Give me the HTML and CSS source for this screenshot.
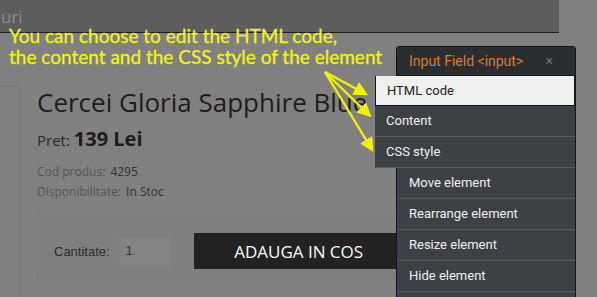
FILE: index.html
```html
<!DOCTYPE html>
<html lang="en">
<head>
    <meta charset="UTF-8">
    <title>Element Editor</title>
    <link rel="stylesheet" href="styles.css">
</head>
<body>
    <div class="topbar"><span class="crumb">uri</span></div>

    <div class="product">
        <div class="gallery"></div>
        <div class="details">
            <h1 class="title">Cercei Gloria Sapphire Blue</h1>
            <p class="price">Pret: <strong>139 Lei</strong></p>
            <p class="meta"><span class="label">Cod produs:</span> 4295</p>
            <p class="meta"><span class="label">Disponibilitate:</span> In Stoc</p>
            <div class="buy-box">
                <label class="qty-label">Cantitate:</label>
                <span class="qty-input">1</span>
                <button class="add-btn">ADAUGA IN COS</button>
            </div>
        </div>
    </div>

    <p class="hint">You can choose to edit the HTML code,<br>the content and the CSS style of the element</p>

    <svg class="arrows" width="597" height="297" viewBox="0 0 597 297">
        <defs>
            <marker id="head" markerWidth="6" markerHeight="6" refX="4" refY="3" orient="auto" markerUnits="strokeWidth">
                <path d="M0,0 L6,3 L0,6 Z" fill="#f2f200"/>
            </marker>
        </defs>
        <line x1="325" y1="72" x2="364" y2="93" stroke="#f2f200" stroke-width="2.4" marker-end="url(#head)"/>
        <line x1="325" y1="72" x2="368" y2="114" stroke="#f2f200" stroke-width="2.4" marker-end="url(#head)"/>
        <line x1="325" y1="72" x2="371" y2="148" stroke="#f2f200" stroke-width="2.4" marker-end="url(#head)"/>
    </svg>

    <div class="panel">
        <div class="panel-head">
            <span class="panel-title">Input Field &lt;input&gt;</span>
            <span class="panel-close">×</span>
        </div>
        <ul class="submenu">
            <li class="active">HTML code</li>
            <li>Content</li>
            <li>CSS style</li>
        </ul>
        <ul class="menu">
            <li>Move element</li>
            <li>Rearrange element</li>
            <li>Resize element</li>
            <li>Hide element</li>
            <li></li>
        </ul>
    </div>
</body>
</html>
```

FILE: styles.css
```css
body {
    margin: 0;
    background: #808080;
    font-family: "Open Sans", sans-serif;
    width: 597px;
    height: 297px;
    overflow: hidden;
    position: relative;
}

.topbar {
    width: 559px;
    height: 32px;
    background: #5d5d5d;
    border-bottom: 1px solid #1e1e1e;
    display: flex;
    align-items: center;
}
.crumb {
    margin-left: 1px;
    color: #8c8c8c;
    font-size: 17px;
}

.product {
    display: flex;
    margin-top: 53px;
}
.gallery {
    width: 20px;
    height: 220px;
    border-top: 1px solid #767676;
    border-right: 1px solid #757575;
    flex-shrink: 0;
}
.details {
    padding-left: 16px;
}
.title {
    margin: 0;
    font-size: 26px;
    font-weight: 400;
    color: #1d1d1d;
    line-height: 32px;
    white-space: nowrap;
}
.price {
    margin: 7px 0 10px;
    font-size: 15px;
    color: #2a2a2a;
}
.price strong {
    font-size: 20px;
    font-weight: 700;
    color: #1c1c1c;
}
.meta {
    margin: 0;
    font-size: 12px;
    line-height: 20px;
    color: #333;
}
.meta .label {
    color: #555;
    margin-right: 2px;
}

.buy-box {
    margin-top: 13px;
    height: 54px;
    padding-top: 8px;
    width: 420px;
    border: 1px solid #7a7a7a;
    background: #7f7f7f;
    display: flex;
    align-items: center;
    padding-left: 16px;
}
.qty-label {
    font-family: "Liberation Sans", Arial, sans-serif;
    font-size: 13px;
    color: #2c2c2c;
}
.qty-input {
    width: 45px;
    height: 29px;
    margin-left: 9px;
    padding-left: 7px;
    background: #838383;
    font-family: "Liberation Sans", Arial, sans-serif;
    font-size: 12px;
    color: #333;
    display: flex;
    align-items: center;
}
.add-btn {
    margin-left: 23px;
    width: 210px;
    height: 36px;
    background: #222;
    border: none;
    color: #fafafa;
    font-family: "Open Sans", sans-serif;
    font-size: 17px;
    padding: 0;
}

.hint {
    position: absolute;
    left: 9px;
    top: 25px;
    margin: 0;
    font-family: Lato, sans-serif;
    font-size: 19px;
    line-height: 21px;
    color: #f2f21e;
    -webkit-text-stroke: 0.3px #f2f21e;
}

.arrows {
    position: absolute;
    left: 0;
    top: 0;
}

.panel {
    position: absolute;
    left: 396px;
    top: 46px;
    width: 178px;
    height: 260px;
    background: #3d4145;
    border: 1px solid #151515;
    border-radius: 3px 3px 0 0;
    font-family: Roboto, sans-serif;
}
.panel-head {
    height: 28px;
    background: #2b2e31;
    display: flex;
    align-items: center;
    justify-content: space-between;
    padding: 0 22px 0 12px;
    border-bottom: 1px solid #151515;
    border-radius: 3px 3px 0 0;
}
.panel-title {
    color: #dc7a2e;
    font-size: 14px;
}
.panel-close {
    color: #6e6e6e;
    font-size: 14px;
}
.submenu,
.menu {
    list-style: none;
    margin: 0;
    padding: 0;
}
.submenu {
    margin-left: -22px;
    width: 200px;
    background: #3d4145;
}
.submenu li,
.menu li {
    height: 30px;
    line-height: 30px;
    border-bottom: 1px solid #55595e;
    color: #f0f0f0;
    font-size: 13px;
    padding-left: 12px;
}
.submenu li {
    padding-left: 11px;
}
.submenu li.active {
    background: #f0f0f0;
    color: #222;
    border: 1px solid #151515;
    border-top: none;
    height: 29px;
    line-height: 29px;
}
```
